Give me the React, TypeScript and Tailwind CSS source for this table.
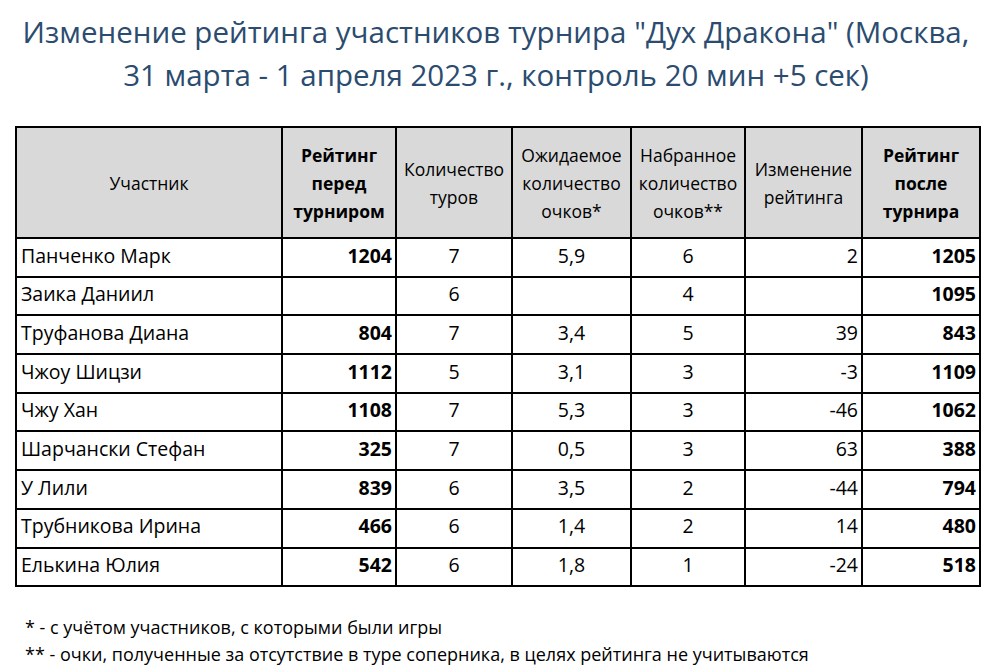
import React from "react";

type Row = {
  name: string;
  before: string;
  tours: string;
  expected: string;
  scored: string;
  change: string;
  after: string;
};

const rows: Row[] = [
  { name: "Панченко Марк", before: "1204", tours: "7", expected: "5,9", scored: "6", change: "2", after: "1205" },
  { name: "Заика Даниил", before: "", tours: "6", expected: "", scored: "4", change: "", after: "1095" },
  { name: "Труфанова Диана", before: "804", tours: "7", expected: "3,4", scored: "5", change: "39", after: "843" },
  { name: "Чжоу Шицзи", before: "1112", tours: "5", expected: "3,1", scored: "3", change: "-3", after: "1109" },
  { name: "Чжу Хан", before: "1108", tours: "7", expected: "5,3", scored: "3", change: "-46", after: "1062" },
  { name: "Шарчански Стефан", before: "325", tours: "7", expected: "0,5", scored: "3", change: "63", after: "388" },
  { name: "У Лили", before: "839", tours: "6", expected: "3,5", scored: "2", change: "-44", after: "794" },
  { name: "Трубникова Ирина", before: "466", tours: "6", expected: "1,4", scored: "2", change: "14", after: "480" },
  { name: "Елькина Юлия", before: "542", tours: "6", expected: "1,8", scored: "1", change: "-24", after: "518" },
];

const font = { fontFamily: "'Open Sans', 'Noto Sans', sans-serif" };

export default function App() {
  const th = "border-2 border-black bg-[#d9d9d9] text-center align-middle leading-[28px] px-0 text-[17.5px]";
  const td = "border-2 border-black align-middle leading-none pb-[4px]";
  return (
    <div className="w-[992px] h-[671px] bg-white text-black" style={font}>
      <div className="pt-[10px] text-center text-[#2b4c6f] text-[29.5px] leading-[43px]">
        <div>Изменение рейтинга участников турнира "Дух Дракона" (Москва,</div>
        <div>31 марта - 1 апреля 2023 г., контроль 20 мин +5 сек)</div>
      </div>
      <table className="ml-[15px] mt-[30px] border-collapse table-fixed w-[964px] text-[19.5px]">
        <colgroup>
          <col className="w-[266px]" />
          <col className="w-[114px]" />
          <col className="w-[116px]" />
          <col className="w-[119px]" />
          <col className="w-[114px]" />
          <col className="w-[117px]" />
          <col className="w-[118px]" />
        </colgroup>
        <thead>
          <tr className="h-[111px]">
            <th className={th + " font-normal"}>Участник</th>
            <th className={th + " font-bold"}>Рейтинг<br />перед<br />турниром</th>
            <th className={th + " font-normal"}>Количество<br />туров</th>
            <th className={th + " font-normal"}>Ожидаемое<br />количество<br />очков*</th>
            <th className={th + " font-normal"}>Набранное<br />количество<br />очков**</th>
            <th className={th + " font-normal"}>Изменение<br />рейтинга</th>
            <th className={th + " font-bold"}>Рейтинг<br />после<br />турнира</th>
          </tr>
        </thead>
        <tbody>
          {rows.map((r) => (
            <tr key={r.name} className="h-[38.7px]">
              <td className={td + " text-left pl-[4px]"}>{r.name}</td>
              <td className={td + " text-right pr-[3px] font-bold"}>{r.before}</td>
              <td className={td + " text-center"}>{r.tours}</td>
              <td className={td + " text-center"}>{r.expected}</td>
              <td className={td + " text-center"}>{r.scored}</td>
              <td className={td + " text-right pr-[3px]"}>{r.change}</td>
              <td className={td + " text-right pr-[3px] font-bold"}>{r.after}</td>
            </tr>
          ))}
        </tbody>
      </table>
      <div className="mt-[27px] ml-[25px] text-[18px] leading-[27px]">
        <div>* - с учётом участников, с которыми были игры</div>
        <div>** - очки, полученные за отсутствие в туре соперника, в целях рейтинга не учитываются</div>
      </div>
    </div>
  );
}
